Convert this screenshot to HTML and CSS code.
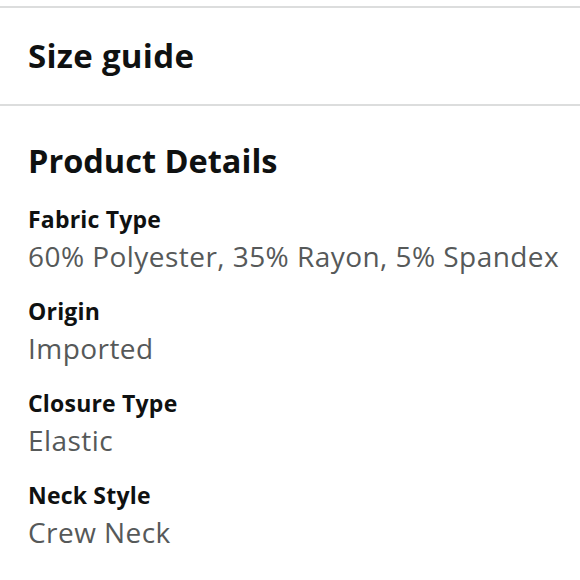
FILE: index.html
```html
<!DOCTYPE html>
<html>
<head>
<meta charset="utf-8">
<link rel="stylesheet" href="styles.css">
</head>
<body>
<div class="page">
  <div class="divider"></div>
  <div class="link-row"><span class="link-title">Size guide</span></div>
  <div class="divider"></div>
  <section class="details">
    <h2 class="details-title">Product Details</h2>
    <div class="attr">
      <div class="attr-label">Fabric Type</div>
      <div class="attr-value">60% Polyester, 35% Rayon, 5% Spandex</div>
    </div>
    <div class="attr">
      <div class="attr-label">Origin</div>
      <div class="attr-value">Imported</div>
    </div>
    <div class="attr">
      <div class="attr-label">Closure Type</div>
      <div class="attr-value">Elastic</div>
    </div>
    <div class="attr">
      <div class="attr-label">Neck Style</div>
      <div class="attr-value">Crew Neck</div>
    </div>
  </section>
</div>
</body>
</html>
```
FILE: styles.css
```css
html, body {
  margin: 0;
  padding: 0;
  background: #ffffff;
}
body {
  font-family: "Open Sans", "Noto Sans", sans-serif;
  color: #0f1111;
}
.page {
  padding-top: 6px;
  display: flex;
  flex-direction: column;
}
.divider {
  height: 2px;
  background: #dcdddd;
}
.link-row {
  height: 96px;
  display: flex;
  align-items: center;
  padding: 0 28px;
}
.link-title {
  font-size: 33px;
  line-height: 40px;
  font-weight: 700;
  letter-spacing: 0.3px;
}
.details {
  padding: 35px 12px 0 28px;
  display: flex;
  flex-direction: column;
  gap: 23px;
}
.details-title {
  margin: 0 0 1px;
  font-size: 32.5px;
  line-height: 40px;
  font-weight: 700;
}
.attr {
  display: flex;
  flex-direction: column;
  gap: 5px;
}
.attr-label {
  font-size: 23px;
  line-height: 28px;
  font-weight: 700;
  letter-spacing: 0.2px;
}
.attr-value {
  font-size: 28px;
  line-height: 36px;
  letter-spacing: 0.45px;
  color: #565959;
  white-space: nowrap;
}
```
